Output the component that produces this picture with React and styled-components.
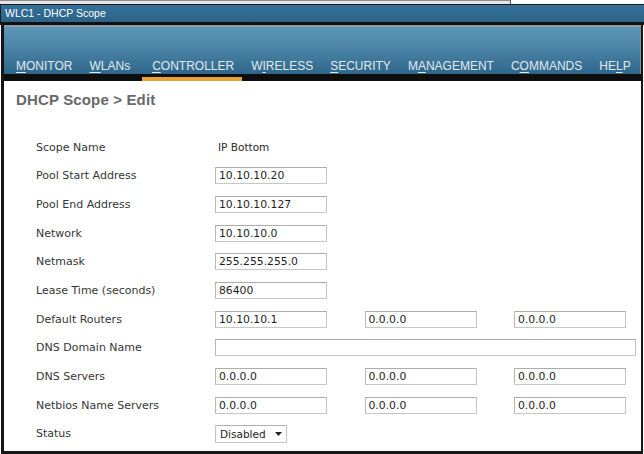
import React from "react";
import styled, { createGlobalStyle } from "styled-components";

const Global = createGlobalStyle`
  html, body {
    margin: 0;
    padding: 0;
    background: #ffffff;
    overflow: hidden;
  }
  * { box-sizing: border-box; }
`;

const Page = styled.div`
  width: 644px;
  height: 454px;
  display: flex;
  flex-direction: column;
  background: #ffffff;
`;

/* edge of the window stacked behind this one */
const BackStrip = styled.div`
  height: 4px;
  width: 511px;
  background: #e4e4e4;
  border-top: 1px solid #8c8c8c;
  border-right: 1px solid #5a5a5a;
`;

const TitleBar = styled.div`
  height: 21px;
  border-top: 1px solid #1a1a1a;
  border-left: 1px solid #1a1a1a;
  border-bottom: 3px solid #121212;
  background: linear-gradient(180deg, #34709a 0%, #2d6487 100%);
  color: #ffffff;
  font-family: "Liberation Sans", Arial, sans-serif;
  font-size: 10.5px;
  line-height: 17px;
  padding-left: 4px;
`;

const Frame = styled.div`
  margin: 0 1px 0 1px;
  border-left: 3px solid #161616;
  border-right: 2px solid #161616;
  border-bottom: 3px solid #161616;
  display: flex;
  flex-direction: column;
`;

const NavBar = styled.nav`
  height: 49px;
  border-top: 2px solid #8d9ca6;
  border-right: 1px solid #7f929e;
  background: linear-gradient(180deg, #5e97b8 0%, #4a84a7 45%, #2f678a 100%);
  display: flex;
  align-items: flex-end;
  gap: 17px;
  padding: 0 0 1.5px 12px;
`;

const NavItem = styled.span`
  position: relative;
  font-family: "Liberation Sans", Arial, sans-serif;
  font-size: 12px;
  line-height: 14px;
  color: #e1eaf0;
  white-space: nowrap;
  margin-left: ${(p) => (p.$active ? "5px" : "0")};

  u {
    text-decoration: underline;
    text-underline-offset: 2px;
  }

  ${(p) =>
    p.$active &&
    `
    &::after {
      content: "";
      position: absolute;
      left: -10px;
      right: -8px;
      bottom: -8.4px;
      height: 4px;
      background: #e9a233;
    }
  `}
`;

const NavBand = styled.div`
  height: 7px;
  background: #0e0e0e;
`;

const Content = styled.main`
  height: 370px;
  background: #ffffff;
  padding: 10px 0 0 12px;
`;

const Heading = styled.h1`
  margin: 0;
  font-family: "Liberation Sans", Arial, sans-serif;
  font-weight: bold;
  font-size: 15px;
  line-height: 17px;
  color: #686868;
  letter-spacing: 0.15px;
`;

const FormGrid = styled.div`
  margin-top: 25px;
  padding-left: 20px;
  display: grid;
  grid-template-columns: 141.5px 112px 112px 112px;
  column-gap: 37.5px;
  grid-auto-rows: 28.67px;
  align-items: center;
`;

const Label = styled.div`
  font-family: "DejaVu Sans", Verdana, sans-serif;
  font-size: 11px;
  color: #363636;
  white-space: nowrap;
  grid-column: 1;
`;

const PlainValue = styled.div`
  font-family: "DejaVu Sans", Verdana, sans-serif;
  font-size: 10.5px;
  color: #2a2a2a;
  padding-left: 3px;
`;

const Field = styled.input`
  height: 17px;
  width: ${(p) => (p.$wide ? "421px" : "112px")};
  grid-column: ${(p) => (p.$wide ? "2 / span 3" : "auto")};
  justify-self: start;
  border: 1px solid #c6c6c6;
  border-top-color: #adadad;
  border-left-color: #b8b8b8;
  background: #ffffff;
  padding: 0 3px;
  margin: 0;
  font-family: "DejaVu Sans", Verdana, sans-serif;
  font-size: 10.8px;
  color: #1e1e1e;
  outline: none;
`;

const Select = styled.div`
  height: 18px;
  width: 72px;
  border: 1px solid #c6c6c6;
  border-top-color: #b0b0b0;
  display: flex;
  align-items: center;
  justify-content: space-between;
  padding: 0 4px 0 4px;
  font-family: "DejaVu Sans", Verdana, sans-serif;
  font-size: 10.5px;
  color: #1e1e1e;
  background: #ffffff;
`;

const Arrow = () => (
  <svg width="7" height="4" viewBox="0 0 7 4">
    <path d="M0 0 H7 L3.5 4 Z" fill="#222" />
  </svg>
);

const navItems = [
  { pre: "", key: "M", post: "ONITOR" },
  { pre: "", key: "W", post: "LANs" },
  { pre: "", key: "C", post: "ONTROLLER", active: true },
  { pre: "W", key: "I", post: "RELESS" },
  { pre: "", key: "S", post: "ECURITY" },
  { pre: "M", key: "A", post: "NAGEMENT" },
  { pre: "C", key: "O", post: "MMANDS" },
  { pre: "HE", key: "L", post: "P" },
];

const rows = [
  { label: "Scope Name", text: "IP Bottom" },
  { label: "Pool Start Address", values: ["10.10.10.20"] },
  { label: "Pool End Address", values: ["10.10.10.127"] },
  { label: "Network", values: ["10.10.10.0"] },
  { label: "Netmask", values: ["255.255.255.0"] },
  { label: "Lease Time (seconds)", values: ["86400"] },
  { label: "Default Routers", values: ["10.10.10.1", "0.0.0.0", "0.0.0.0"] },
  { label: "DNS Domain Name", wide: "" },
  { label: "DNS Servers", values: ["0.0.0.0", "0.0.0.0", "0.0.0.0"] },
  { label: "Netbios Name Servers", values: ["0.0.0.0", "0.0.0.0", "0.0.0.0"] },
  { label: "Status", select: "Disabled" },
];

function FormRow({ row }) {
  return (
    <>
      <Label>{row.label}</Label>
      {row.text !== undefined && <PlainValue>{row.text}</PlainValue>}
      {row.values &&
        row.values.map((v, i) => <Field key={i} readOnly defaultValue={v} />)}
      {row.wide !== undefined && <Field $wide readOnly defaultValue={row.wide} />}
      {row.select && (
        <Select>
          <span>{row.select}</span>
          <Arrow />
        </Select>
      )}
    </>
  );
}

export default function App() {
  return (
    <>
      <Global />
      <Page>
        <BackStrip />
        <TitleBar>WLC1 - DHCP Scope</TitleBar>
        <Frame>
          <NavBar>
            {navItems.map((n, i) => (
              <NavItem key={i} $active={n.active}>
                {n.pre}
                <u>{n.key}</u>
                {n.post}
              </NavItem>
            ))}
          </NavBar>
          <NavBand />
          <Content>
            <Heading>DHCP Scope &gt; Edit</Heading>
            <FormGrid>
              {rows.map((r, i) => (
                <FormRow key={i} row={r} />
              ))}
            </FormGrid>
          </Content>
        </Frame>
      </Page>
    </>
  );
}
